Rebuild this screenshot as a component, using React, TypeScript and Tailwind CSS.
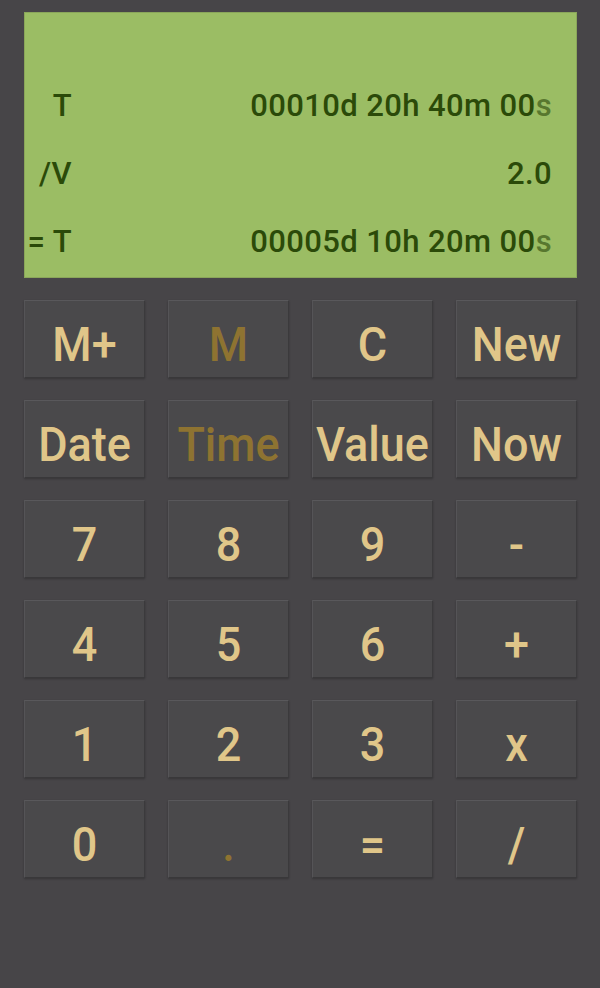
import React from "react";

type Btn = { label: string; dim?: boolean };

const rows: Btn[][] = [
  [{ label: "M+" }, { label: "M", dim: true }, { label: "C" }, { label: "New" }],
  [{ label: "Date" }, { label: "Time", dim: true }, { label: "Value" }, { label: "Now" }],
  [{ label: "7" }, { label: "8" }, { label: "9" }, { label: "-" }],
  [{ label: "4" }, { label: "5" }, { label: "6" }, { label: "+" }],
  [{ label: "1" }, { label: "2" }, { label: "3" }, { label: "x" }],
  [{ label: "0" }, { label: ".", dim: true }, { label: "=" }, { label: "/" }],
];

function DisplayRow({ label, value, last }: { label: string; value: string; last?: string }) {
  return (
    <div className="flex h-[68px] items-center">
      <div className="w-[47px] text-right whitespace-pre">{label}</div>
      <div className="flex-1 text-right pr-6">
        {value}
        {last ? <span className="text-[#58772f]">{last}</span> : null}
      </div>
    </div>
  );
}

export default function App() {
  return (
    <div
      className="w-full h-[988px] bg-[#474548] pl-6 pr-[23px] pt-3"
      style={{ fontFamily: "Roboto, 'Noto Sans', sans-serif" }}
    >
      <div className="h-[266px] bg-[#9bbd64] border border-[#8aa65a] flex flex-col justify-end pb-[2px] text-[31px] font-medium leading-none text-[#2b4a09] tracking-[0.4px]">
        <DisplayRow label="T" value="00010d 20h 40m 00" last="s" />
        <DisplayRow label="/V" value="2.0" />
        <DisplayRow label="= T" value="00005d 10h 20m 00" last="s" />
      </div>
      <div className="mt-[22px] grid grid-cols-4 gap-x-[23px] gap-y-[22px]">
        {rows.flat().map((b, i) => (
          <div
            key={i}
            className={`h-[78px] flex items-center justify-center pt-[11px] bg-[#4a494b] border border-t-[#59585b] border-l-[#555457] border-r-[#3b3a3c] border-b-[#39383a] shadow-[0_1px_2px_rgba(0,0,0,0.25)] text-[45px] font-medium leading-none ${
              b.dim ? "text-[#8e7331]" : "text-[#e0c689]"
            }`}
          >
            <span className="inline-block scale-y-[1.07]">{b.label}</span>
          </div>
        ))}
      </div>
    </div>
  );
}
